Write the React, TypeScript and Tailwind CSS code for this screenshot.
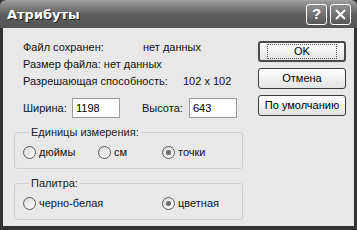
function Radio({ checked, label, width }: { checked?: boolean; label: string; width?: string }) {
  return (
    <label className={`flex items-center h-[16px] ${width ?? ''}`}>
      <span className="w-[13px] h-[13px] rounded-full border border-[#5a5a5a] bg-gradient-to-br from-[#d8d8d8] to-white flex items-center justify-center shrink-0">
        {checked && <span className="w-[5px] h-[5px] rounded-full bg-[#6a6a6a]" />}
      </span>
      <span className="ml-[3px]">{label}</span>
    </label>
  )
}

function Group({ title, children }: { title: string; children: React.ReactNode }) {
  return (
    <fieldset className="border border-[#cfcfcf] rounded-[3px] pl-[8px] pr-2">
      <legend className="ml-[6px] px-[2px] leading-[14px] text-[#222]">{title}</legend>
      {children}
    </fieldset>
  )
}

function Button({ label, primary }: { label: string; primary?: boolean }) {
  return (
    <button
      className={`h-[21px] w-[88px] rounded-[3px] bg-gradient-to-b from-white to-[#e2e2e2] flex items-center justify-center text-black ${
        primary ? 'border-2 border-[#4a4a4a]' : 'border border-[#3c3c3c]'
      }`}
    >
      <span className={primary ? 'px-[26px] border border-dotted border-[#555] leading-[13px]' : ''}>{label}</span>
    </button>
  )
}

export default function App() {
  return (
    <div
      className="w-[357px] h-[230px] bg-[#333] flex flex-col text-[11px] text-[#111]"
      style={{ fontFamily: '"Liberation Sans", Arial, sans-serif' }}
    >
      {/* title bar */}
      <div className="h-[28px] shrink-0 flex items-center justify-between pl-[7px] pr-[6px] bg-gradient-to-b from-[#9a9a9a] via-[#5e5e5e] to-[#555] rounded-t-[6px] border-t border-[#a0a0a0]">
        <span
          className="text-white font-bold text-[13px] [text-shadow:1px_1px_0_#222]"
          style={{ fontFamily: '"DejaVu Sans", sans-serif' }}
        >
          Атрибуты
        </span>
        <div className="flex gap-[3px]">
          <span className="w-[21px] h-[21px] rounded-[3px] border border-white bg-gradient-to-b from-[#8f8f8f] to-[#575757] flex items-center justify-center text-white font-bold text-[15px]">
            ?
          </span>
          <span className="w-[21px] h-[21px] rounded-[3px] border border-white bg-gradient-to-b from-[#8f8f8f] to-[#575757] flex items-center justify-center">
            <svg width="11" height="11" viewBox="0 0 11 11">
              <path d="M1 1L10 10M10 1L1 10" stroke="white" strokeWidth="2" />
            </svg>
          </span>
        </div>
      </div>

      {/* body */}
      <div className="flex-1 mx-[3px] mb-[4px] bg-[#e8e8e8] flex pl-[11px] pr-[8px] pt-[11px]">
        <div className="w-[230px] flex flex-col">
          <div className="pl-[9px] flex flex-col gap-[1px]">
            <div className="flex h-[16px] items-center">
              <span className="w-[120px]">Файл сохранен:</span>
              <span>нет данных</span>
            </div>
            <div className="flex h-[16px] items-center">Размер файла: нет данных</div>
            <div className="flex h-[16px] items-center">
              <span className="w-[160px]">Разрешающая способность:</span>
              <span>102 x 102</span>
            </div>
            <div className="flex items-center h-[20px] mt-[8px]">
              <span className="w-[49px] whitespace-nowrap">Ширина:</span>
              <span className="w-[48px] h-[20px] bg-white border border-[#9a9a9a] pl-[3px] leading-[18px] text-black">1198</span>
              <span className="ml-[22px] w-[47px] whitespace-nowrap">Высота:</span>
              <span className="w-[48px] h-[20px] bg-white border border-[#9a9a9a] pl-[3px] leading-[18px] text-black">643</span>
            </div>
          </div>

          <div className="mt-[7px]">
            <Group title="Единицы измерения:">
              <div className="flex items-center pt-[5px] pb-[8px]">
                <Radio label="дюймы" width="w-[75px]" />
                <Radio label="см" width="w-[64px]" />
                <Radio label="точки" checked />
              </div>
            </Group>
          </div>
          <div className="mt-[7px]">
            <Group title="Палитра:">
              <div className="flex items-center pt-[5px] pb-[8px]">
                <Radio label="черно-белая" width="w-[139px]" />
                <Radio label="цветная" checked />
              </div>
            </Group>
          </div>
        </div>

        <div className="ml-[15px] flex flex-col gap-[6px] pt-[2px]">
          <Button label="OK" primary />
          <Button label="Отмена" />
          <Button label="По умолчанию" />
        </div>
      </div>
    </div>
  )
}
